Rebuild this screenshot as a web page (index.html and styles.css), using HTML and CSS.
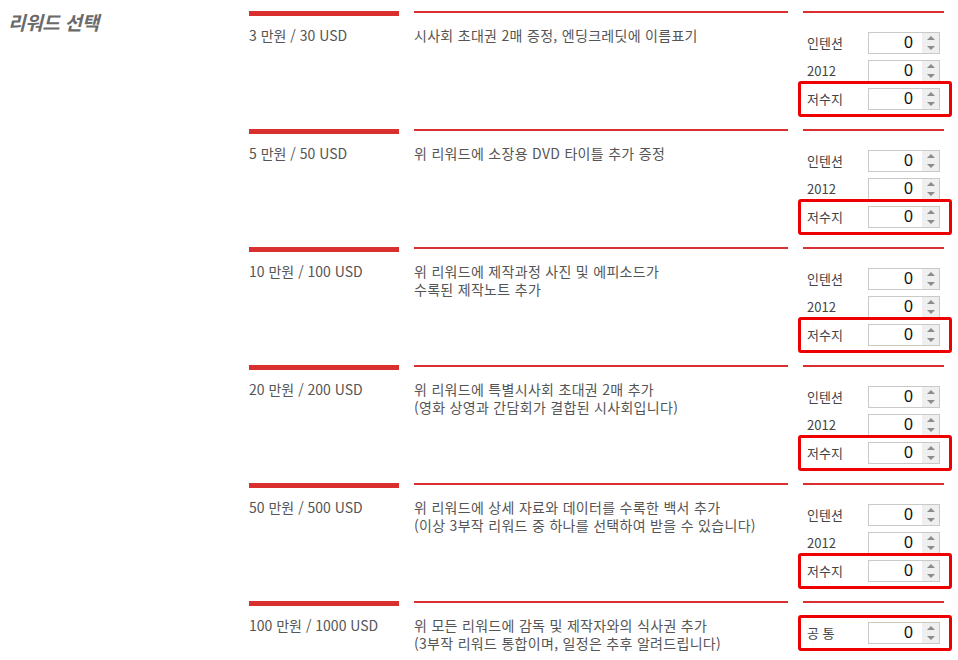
FILE: index.html
```html
<!DOCTYPE html>
<html lang="ko">
<head>
<meta charset="utf-8">
<title>리워드 선택</title>
<link rel="stylesheet" href="styles.css">
</head>
<body>
<div class="page">
  <div class="title">리워드 선택</div>
  <div class="rewards">

    <div class="reward">
      <div class="price">3 만원 / 30 USD</div>
      <div class="desc">시사회 초대권 2매 증정, 엔딩크레딧에 이름표기</div>
      <div class="opts">
        <div class="opt"><span class="lbl">인텐션</span><div class="num"><span class="val">0</span><span class="spin"><i class="up"></i><i class="dn"></i></span></div></div>
        <div class="opt"><span class="lbl">2012</span><div class="num"><span class="val">0</span><span class="spin"><i class="up"></i><i class="dn"></i></span></div></div>
        <div class="opt hl"><span class="lbl">저수지</span><div class="num"><span class="val">0</span><span class="spin"><i class="up"></i><i class="dn"></i></span></div></div>
      </div>
    </div>

    <div class="reward">
      <div class="price">5 만원 / 50 USD</div>
      <div class="desc">위 리워드에 소장용 DVD 타이틀 추가 증정</div>
      <div class="opts">
        <div class="opt"><span class="lbl">인텐션</span><div class="num"><span class="val">0</span><span class="spin"><i class="up"></i><i class="dn"></i></span></div></div>
        <div class="opt"><span class="lbl">2012</span><div class="num"><span class="val">0</span><span class="spin"><i class="up"></i><i class="dn"></i></span></div></div>
        <div class="opt hl"><span class="lbl">저수지</span><div class="num"><span class="val">0</span><span class="spin"><i class="up"></i><i class="dn"></i></span></div></div>
      </div>
    </div>

    <div class="reward">
      <div class="price">10 만원 / 100 USD</div>
      <div class="desc"><span class="ln">위 리워드에 제작과정 사진 및 에피소드가</span><span class="ln">수록된 제작노트 추가</span></div>
      <div class="opts">
        <div class="opt"><span class="lbl">인텐션</span><div class="num"><span class="val">0</span><span class="spin"><i class="up"></i><i class="dn"></i></span></div></div>
        <div class="opt"><span class="lbl">2012</span><div class="num"><span class="val">0</span><span class="spin"><i class="up"></i><i class="dn"></i></span></div></div>
        <div class="opt hl"><span class="lbl">저수지</span><div class="num"><span class="val">0</span><span class="spin"><i class="up"></i><i class="dn"></i></span></div></div>
      </div>
    </div>

    <div class="reward">
      <div class="price">20 만원 / 200 USD</div>
      <div class="desc"><span class="ln">위 리워드에 특별시사회 초대권 2매 추가</span><span class="ln">(영화 상영과 간담회가 결합된 시사회입니다)</span></div>
      <div class="opts">
        <div class="opt"><span class="lbl">인텐션</span><div class="num"><span class="val">0</span><span class="spin"><i class="up"></i><i class="dn"></i></span></div></div>
        <div class="opt"><span class="lbl">2012</span><div class="num"><span class="val">0</span><span class="spin"><i class="up"></i><i class="dn"></i></span></div></div>
        <div class="opt hl"><span class="lbl">저수지</span><div class="num"><span class="val">0</span><span class="spin"><i class="up"></i><i class="dn"></i></span></div></div>
      </div>
    </div>

    <div class="reward">
      <div class="price">50 만원 / 500 USD</div>
      <div class="desc"><span class="ln">위 리워드에 상세 자료와 데이터를 수록한 백서 추가</span><span class="ln">(이상 3부작 리워드 중 하나를 선택하여 받을 수 있습니다)</span></div>
      <div class="opts">
        <div class="opt"><span class="lbl">인텐션</span><div class="num"><span class="val">0</span><span class="spin"><i class="up"></i><i class="dn"></i></span></div></div>
        <div class="opt"><span class="lbl">2012</span><div class="num"><span class="val">0</span><span class="spin"><i class="up"></i><i class="dn"></i></span></div></div>
        <div class="opt hl"><span class="lbl">저수지</span><div class="num"><span class="val">0</span><span class="spin"><i class="up"></i><i class="dn"></i></span></div></div>
      </div>
    </div>

    <div class="reward last">
      <div class="price">100 만원 / 1000 USD</div>
      <div class="desc"><span class="ln">위 모든 리워드에 감독 및 제작자와의 식사권 추가</span><span class="ln">(3부작 리워드 통합이며, 일정은 추후 알려드립니다)</span></div>
      <div class="opts">
        <div class="opt hl"><span class="lbl">공 통</span><div class="num"><span class="val">0</span><span class="spin"><i class="up"></i><i class="dn"></i></span></div></div>
      </div>
    </div>

  </div>
</div>
</body>
</html>
```
FILE: styles.css
```css
html, body {
  margin: 0;
  padding: 0;
  background: #fff;
}
body {
  font-family: "Noto Sans CJK KR", "Noto Sans", sans-serif;
  color: #555;
}
.page {
  display: flex;
  align-items: flex-start;
}
.title {
  width: 249px;
  box-sizing: border-box;
  padding: 9px 0 0 8px;
  font-size: 19px;
  line-height: 26px;
  font-weight: bold;
  font-style: italic;
  color: #6a6a6a;
  letter-spacing: -0.3px;
}
.rewards {
  padding-top: 11px;
  display: flex;
  flex-direction: column;
}
.reward {
  display: grid;
  grid-template-columns: 150px 374px 141px;
  column-gap: 15px;
  height: 118px;
}
.reward.last {
  height: 60px;
}
.price {
  border-top: 5px solid #d9302f;
  padding-top: 10px;
  font-size: 14px;
  line-height: 18px;
  color: #555;
}
.desc {
  border-top: 2px solid #d9302f;
  padding-top: 13px;
  font-size: 14px;
  line-height: 18px;
  color: #555;
  letter-spacing: 0.3px;
  display: flex;
  flex-direction: column;
}
.desc .ln {
  display: block;
  height: 18px;
}
.opts {
  border-top: 2px solid #d9302f;
  padding-top: 16px;
  display: flex;
  flex-direction: column;
}
.opt {
  display: flex;
  align-items: center;
  height: 28px;
}
.opt.hl {
  position: relative;
}
.opt.hl::after {
  content: "";
  position: absolute;
  left: -5px;
  right: -8px;
  top: -4px;
  bottom: -4px;
  border: 3px solid #ee0000;
  border-radius: 3px;
}
.lbl {
  width: 61px;
  padding-left: 4px;
  font-size: 13px;
  line-height: 18px;
  color: #444;
  margin-top: -1px;
}
.num {
  width: 72px;
  height: 22px;
  box-sizing: border-box;
  border: 1px solid #c9c9c9;
  display: flex;
  background: #fff;
}
.val {
  flex: 1;
  text-align: right;
  padding-right: 9px;
  font-family: "Liberation Sans", "Noto Sans", sans-serif;
  font-size: 16px;
  line-height: 19px;
  color: #111;
}
.spin {
  width: 17px;
  background: #efefef;
  display: flex;
  flex-direction: column;
  align-items: center;
  justify-content: space-between;
  padding: 3px 0;
  box-sizing: border-box;
}
.spin i {
  display: block;
  width: 0;
  height: 0;
  border-left: 4px solid transparent;
  border-right: 4px solid transparent;
}
.spin .up {
  border-bottom: 4px solid #8c8c8c;
}
.spin .dn {
  border-top: 4px solid #8c8c8c;
}
```
